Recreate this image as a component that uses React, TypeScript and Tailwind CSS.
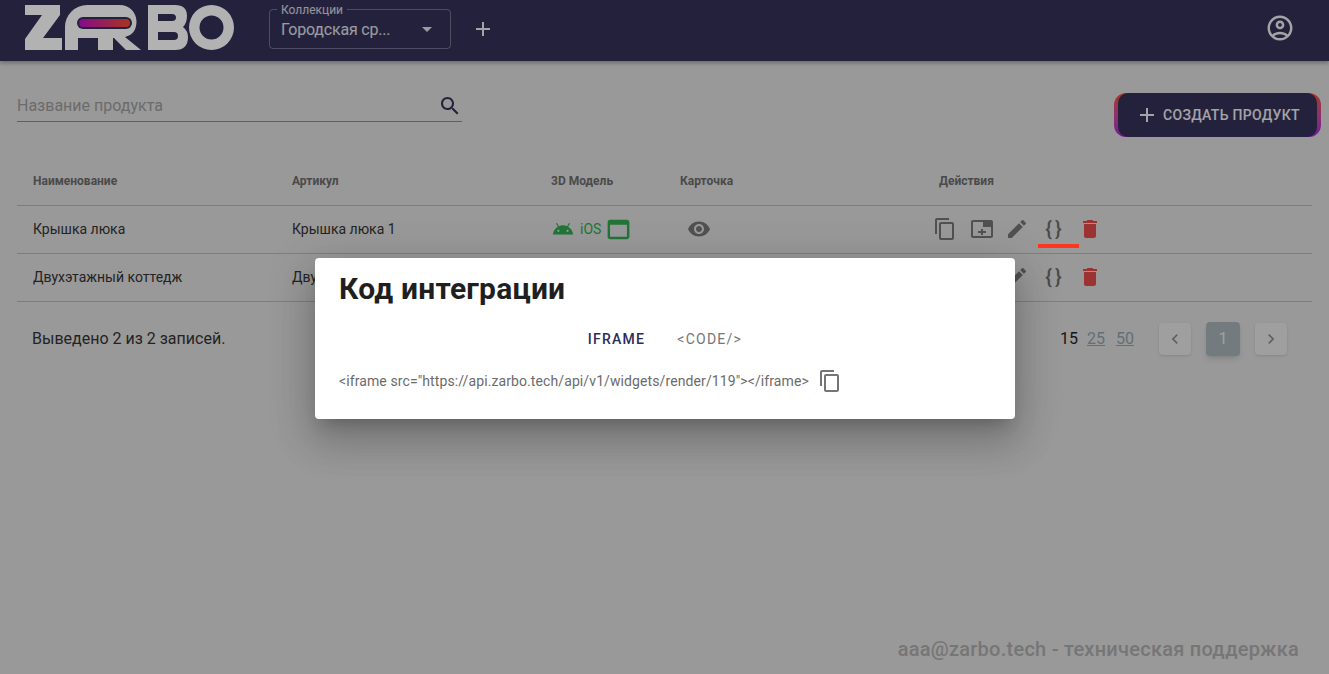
const ICONS = {
  copy: 'M16 1H4c-1.1 0-2 .9-2 2v14h2V3h12V1zm3 4H8c-1.1 0-2 .9-2 2v14c0 1.1.9 2 2 2h11c1.1 0 2-.9 2-2V7c0-1.1-.9-2-2-2zm0 16H8V7h11v14z',
  edit: 'M3 17.25V21h3.75L17.81 9.94l-3.75-3.75L3 17.25zM20.71 7.04c.39-.39.39-1.02 0-1.41l-2.34-2.34a.9959.9959 0 0 0-1.41 0l-1.83 1.83 3.75 3.75 1.83-1.83z',
  trash: 'M6 19c0 1.1.9 2 2 2h8c1.1 0 2-.9 2-2V7H6v12zM19 4h-3.5l-1-1h-5l-1 1H5v2h14V4z',
  eye: 'M12 4.5C7 4.5 2.73 7.61 1 12c1.73 4.39 6 7.5 11 7.5s9.27-3.11 11-7.5c-1.73-4.39-6-7.5-11-7.5zM12 17c-2.76 0-5-2.24-5-5s2.24-5 5-5 5 2.24 5 5-2.24 5-5 5zm0-8c-1.66 0-3 1.34-3 3s1.34 3 3 3 3-1.34 3-3-1.34-3-3-3z',
  search: 'M15.5 14h-.79l-.28-.27C15.41 12.59 16 11.11 16 9.5 16 5.91 13.09 3 9.5 3S3 5.91 3 9.5 5.91 16 9.5 16c1.61 0 3.09-.59 4.23-1.57l.27.28v.79l5 4.99L20.49 19l-4.99-5zm-6 0C7.01 14 5 11.99 5 9.5S7.01 5 9.5 5 14 7.01 14 9.5 11.99 14 9.5 14z',
  plus: 'M19 13h-6v6h-2v-6H5v-2h6V5h2v6h6v2z',
  account: 'M12 2C6.48 2 2 6.48 2 12s4.48 10 10 10 10-4.48 10-10S17.52 2 12 2zM7.35 18.5C8.66 17.56 10.26 17 12 17s3.34.56 4.65 1.5c-1.31.94-2.91 1.5-4.65 1.5s-3.34-.56-4.65-1.5zm10.79-1.38C16.45 15.8 14.32 15 12 15s-4.45.8-6.14 2.12C4.7 15.73 4 13.95 4 12c0-4.42 3.58-8 8-8s8 3.58 8 8c0 1.95-.7 3.73-1.86 5.12zM12 6c-1.93 0-3.5 1.57-3.5 3.5S10.07 13 12 13s3.5-1.57 3.5-3.5S13.93 6 12 6zm0 5c-.83 0-1.5-.67-1.5-1.5S11.17 8 12 8s1.5.67 1.5 1.5S12.83 11 12 11z',
  web: 'M19 4H5c-1.11 0-2 .9-2 2v12c0 1.1.89 2 2 2h14c1.1 0 2-.9 2-2V6c0-1.1-.89-2-2-2zm0 14H5V8h14v10z',
  android: 'M17.6 9.48l1.84-3.18c.16-.31.04-.69-.26-.85-.29-.15-.65-.06-.83.22l-1.88 3.24c-2.86-1.21-6.08-1.21-8.94 0L5.65 5.67c-.19-.29-.58-.38-.87-.2-.28.18-.37.54-.22.83L6.4 9.48C3.3 11.25 1.28 14.44 1 18h22c-.28-3.56-2.3-6.75-5.4-8.52zM7 15.25c-.69 0-1.25-.56-1.25-1.25s.56-1.25 1.25-1.25 1.25.56 1.25 1.25-.56 1.25-1.25 1.25zm10 0c-.69 0-1.25-.56-1.25-1.25s.56-1.25 1.25-1.25 1.25.56 1.25 1.25-.56 1.25-1.25 1.25z',
  addCard: 'M21 3H3c-1.1 0-2 .9-2 2v14c0 1.1.9 2 2 2h18c1.1 0 2-.9 2-2V5c0-1.1-.9-2-2-2zm0 16H3V5h10v5h8v9zm-8-7h-2v2H8v2h3v2h2v-2h3v-2h-3v-2z',
  left: 'M15.41 7.41 14 6l-6 6 6 6 1.41-1.41L10.83 12z',
  right: 'M10 6 8.59 7.41 13.17 12l-4.58 4.59L10 18l6-6z',
};

function Icon({ d, className }: { d: string; className: string }) {
  return (
    <svg viewBox="0 0 24 24" fill="currentColor" className={className}>
      <path d={d} />
    </svg>
  );
}

function Logo() {
  return (
    <svg viewBox="24 4 210 46" className="w-[210px] h-[46px] -mt-[4px] text-white" fill="currentColor">
      <defs>
        <linearGradient id="pill" x1="0" x2="1" y1="0" y2="0">
          <stop offset="0" stopColor="#c010c8" />
          <stop offset="1" stopColor="#f04c2c" />
        </linearGradient>
      </defs>
      <path d="M25 5H60V15L43 38H62V50H25V39L42 15H25Z" />
      <path d="M65 50V27A22 22 0 0 1 87 5H120A16.500 16.500 0 0 1 136.500 21.500Q136.500 34 125 37L141 50H126L114 38H113V50H98V38H78V50Z" />
      <rect x="77" y="17" width="55" height="12" rx="6" fill="#333057" />
      <rect x="79" y="19" width="51" height="8" rx="4" fill="url(#pill)" />
      <path fillRule="evenodd" d="M148 5H175Q187 5 187 16Q187 23 183 27Q188 31 188 37Q188 50 175 50H148ZM158 14V21H172Q176 21 176 17.500Q176 14 172 14ZM158 32V40H174Q178 40 178 36Q178 32 174 32Z" />
      <path fillRule="evenodd" d="M211.500 5a22.500 22.500 0 1 0 0 45a22.500 22.500 0 1 0 0-45ZM211.500 15.500a12 12 0 1 1 0 24a12 12 0 1 1 0-24Z" />
    </svg>
  );
}

function Header() {
  return (
    <header className="h-[61px] shrink-0 bg-[#333057] flex items-center pl-[24px] pr-[34px] pb-[3px] text-white shadow-[0_2px_4px_rgba(0,0,0,0.3)] relative">
      <Logo />
      <div className="ml-[35px] relative w-[182px] h-[40px] rounded border border-white/30 flex items-center pl-[11px] pr-[18px] justify-between">
        <span className="absolute -top-[7px] left-[7px] px-1 bg-[#333057] text-[12px] leading-[14px] text-white/80">Коллекции</span>
        <span className="pt-[2px] text-[16px] tracking-[-0.2px] text-white/85">Городская ср...</span>
        <span className="w-0 h-0 border-x-[5px] border-x-transparent border-t-[5px] border-t-white/85" />
      </div>
      <Icon d={ICONS.plus} className="ml-5 size-6 text-white/90" />
      <Icon d={ICONS.account} className="ml-auto size-[30px] -mt-[2px] text-white/90" />
    </header>
  );
}

function Toolbar() {
  return (
    <div className="flex items-start justify-between pl-[17px] pr-[8px] pt-[32px]">
      <div className="w-[445px] h-[29px] border-b border-[#8a8a8a] flex items-center justify-between pb-[2px]">
        <span className="text-[16px] text-[#9a9a9a]">Название продукта</span>
        <Icon d={ICONS.search} className="size-6 text-[#333057]" />
      </div>
      <button className="h-[44px] w-[207px] rounded-xl bg-gradient-to-b from-[#f04c2c] to-[#b010e0] px-[4px]">
        <span className="h-full w-full rounded-[10px] bg-[#333057] flex items-center pl-[17px] gap-[4px] text-white/90 text-[14px] font-medium tracking-[0.3px]">
          <Icon d={ICONS.plus} className="size-6" />
          СОЗДАТЬ ПРОДУКТ
        </span>
      </button>
    </div>
  );
}

function RowActions({ marked }: { marked: boolean }) {
  return (
    <div className="flex items-center gap-[12px] -ml-[6px] text-[#757575]">
      <Icon d={ICONS.copy} className="size-6" />
      <Icon d={ICONS.addCard} className="size-6 translate-x-px" />
      <Icon d={ICONS.edit} className="size-6" />
      <div className="relative w-[24px] h-[24px] flex items-center justify-center pl-[4px] text-[20px] font-medium tracking-[3px] leading-none text-[#6b6b6b]">
        {'{}'}
        {marked && <span className="absolute top-[27px] -left-[3px] w-[41px] h-[4px] bg-[#ff3520] z-10" />}
      </div>
      <Icon d={ICONS.trash} className="size-6 translate-x-px text-[#e04848]" />
    </div>
  );
}

const rows = [
  { name: 'Крышка люка', sku: 'Крышка люка 1' },
  { name: 'Двухэтажный коттедж', sku: 'Двухэтажный коттедж 1' },
];

function ProductTable() {
  return (
    <table className="mt-[20px] ml-[17px] w-[1295px] table-fixed border-collapse text-[14px] text-[#1f1f1f]">
      <colgroup>
        <col className="w-[275px]" />
        <col className="w-[259px]" />
        <col className="w-[129px]" />
        <col className="w-[259px]" />
        <col />
      </colgroup>
      <thead>
        <tr className="h-[48px] border-b border-[#b5b5b5] text-[12px] text-[#6b6b6b]">
          <th className="pl-4 text-left font-bold">Наименование</th>
          <th className="text-left font-bold">Артикул</th>
          <th className="text-left font-bold">3D Модель</th>
          <th className="text-left font-bold">Карточка</th>
          <th className="text-left font-bold">Действия</th>
        </tr>
      </thead>
      <tbody>
        {rows.map((row, i) => (
          <tr key={row.name} className="h-[48px] border-b border-[#b5b5b5] text-[#333]">
            <td className="pl-4">{row.name}</td>
            <td>{row.sku}</td>
            <td>
              <div className="flex items-center text-[#2fa84f]">
                <Icon d={ICONS.android} className="size-[22px] ml-px mr-[6px]" />
                <span className="text-[14px]">iOS</span>
                <Icon d={ICONS.web} className="size-[29px] ml-[3px]" />
              </div>
            </td>
            <td>
              <Icon d={ICONS.eye} className="size-6 ml-[7px] text-[#757575]" />
            </td>
            <td>
              <RowActions marked={i === 0} />
            </td>
          </tr>
        ))}
      </tbody>
    </table>
  );
}

function Pager() {
  return (
    <div className="flex items-center justify-between ml-[32px] mr-[42px] mt-[20px] text-[16px] text-[#333]">
      <span>Выведено 2 из 2 записей.</span>
      <div className="flex items-center">
        <span className="text-[#1f1f1f]">15</span>
        <span className="ml-[9px] text-[#8fa0a8] underline">25</span>
        <span className="ml-[11px] text-[#8fa0a8] underline">50</span>
        <div className="ml-[25px] size-8 rounded bg-[#e4e4e4] shadow flex items-center justify-center text-[#8a8a8a]">
          <Icon d={ICONS.left} className="size-5" />
        </div>
        <div className="ml-[15px] size-[34px] rounded bg-[#a5b1b6] shadow-md flex items-center justify-center text-white/70">1</div>
        <div className="ml-[15px] size-8 rounded bg-[#e4e4e4] shadow flex items-center justify-center text-[#8a8a8a]">
          <Icon d={ICONS.right} className="size-5" />
        </div>
      </div>
    </div>
  );
}

function IntegrationModal() {
  return (
    <div className="absolute inset-0 bg-black/30 flex justify-center pt-[258px] pl-[1px]">
      <div className="w-[700px] h-[161px] bg-white rounded shadow-[0_11px_15px_-7px_rgba(0,0,0,0.2),0_24px_38px_3px_rgba(0,0,0,0.14),0_9px_46px_8px_rgba(0,0,0,0.12)] px-6 pt-[13px] text-[#1f1f1f]">
        <h2 className="text-[30px] leading-[36px] tracking-[0.2px] font-bold">Код интеграции</h2>
        <div className="mt-[22px] flex justify-center gap-[32px] text-[14px] tracking-[1.25px] font-medium leading-[20px]">
          <span className="text-[#2d2a5c]">IFRAME</span>
          <span className="text-[#757575] font-normal">{'<CODE/>'}</span>
        </div>
        <div className="mt-[20px] flex items-center gap-[9px] text-[14px] tracking-[0.1px] text-[#6b6b6b]">
          <span>{'<iframe src="https://api.zarbo.tech/api/v1/widgets/render/119"></iframe>'}</span>
          <Icon d={ICONS.copy} className="size-6 text-[#757575]" />
        </div>
      </div>
    </div>
  );
}

export default function App() {
  return (
    <div className="relative h-screen overflow-hidden flex flex-col bg-[#dbdbdb] font-['Roboto',sans-serif]">
      <Header />
      <Toolbar />
      <ProductTable />
      <Pager />
      <div className="mt-auto pr-[30px] pb-[10px] text-right text-[20px] font-medium tracking-[0.25px] text-[#aaaaaa]">
        aaa@zarbo.tech - техническая поддержка
      </div>
      <IntegrationModal />
    </div>
  );
}
